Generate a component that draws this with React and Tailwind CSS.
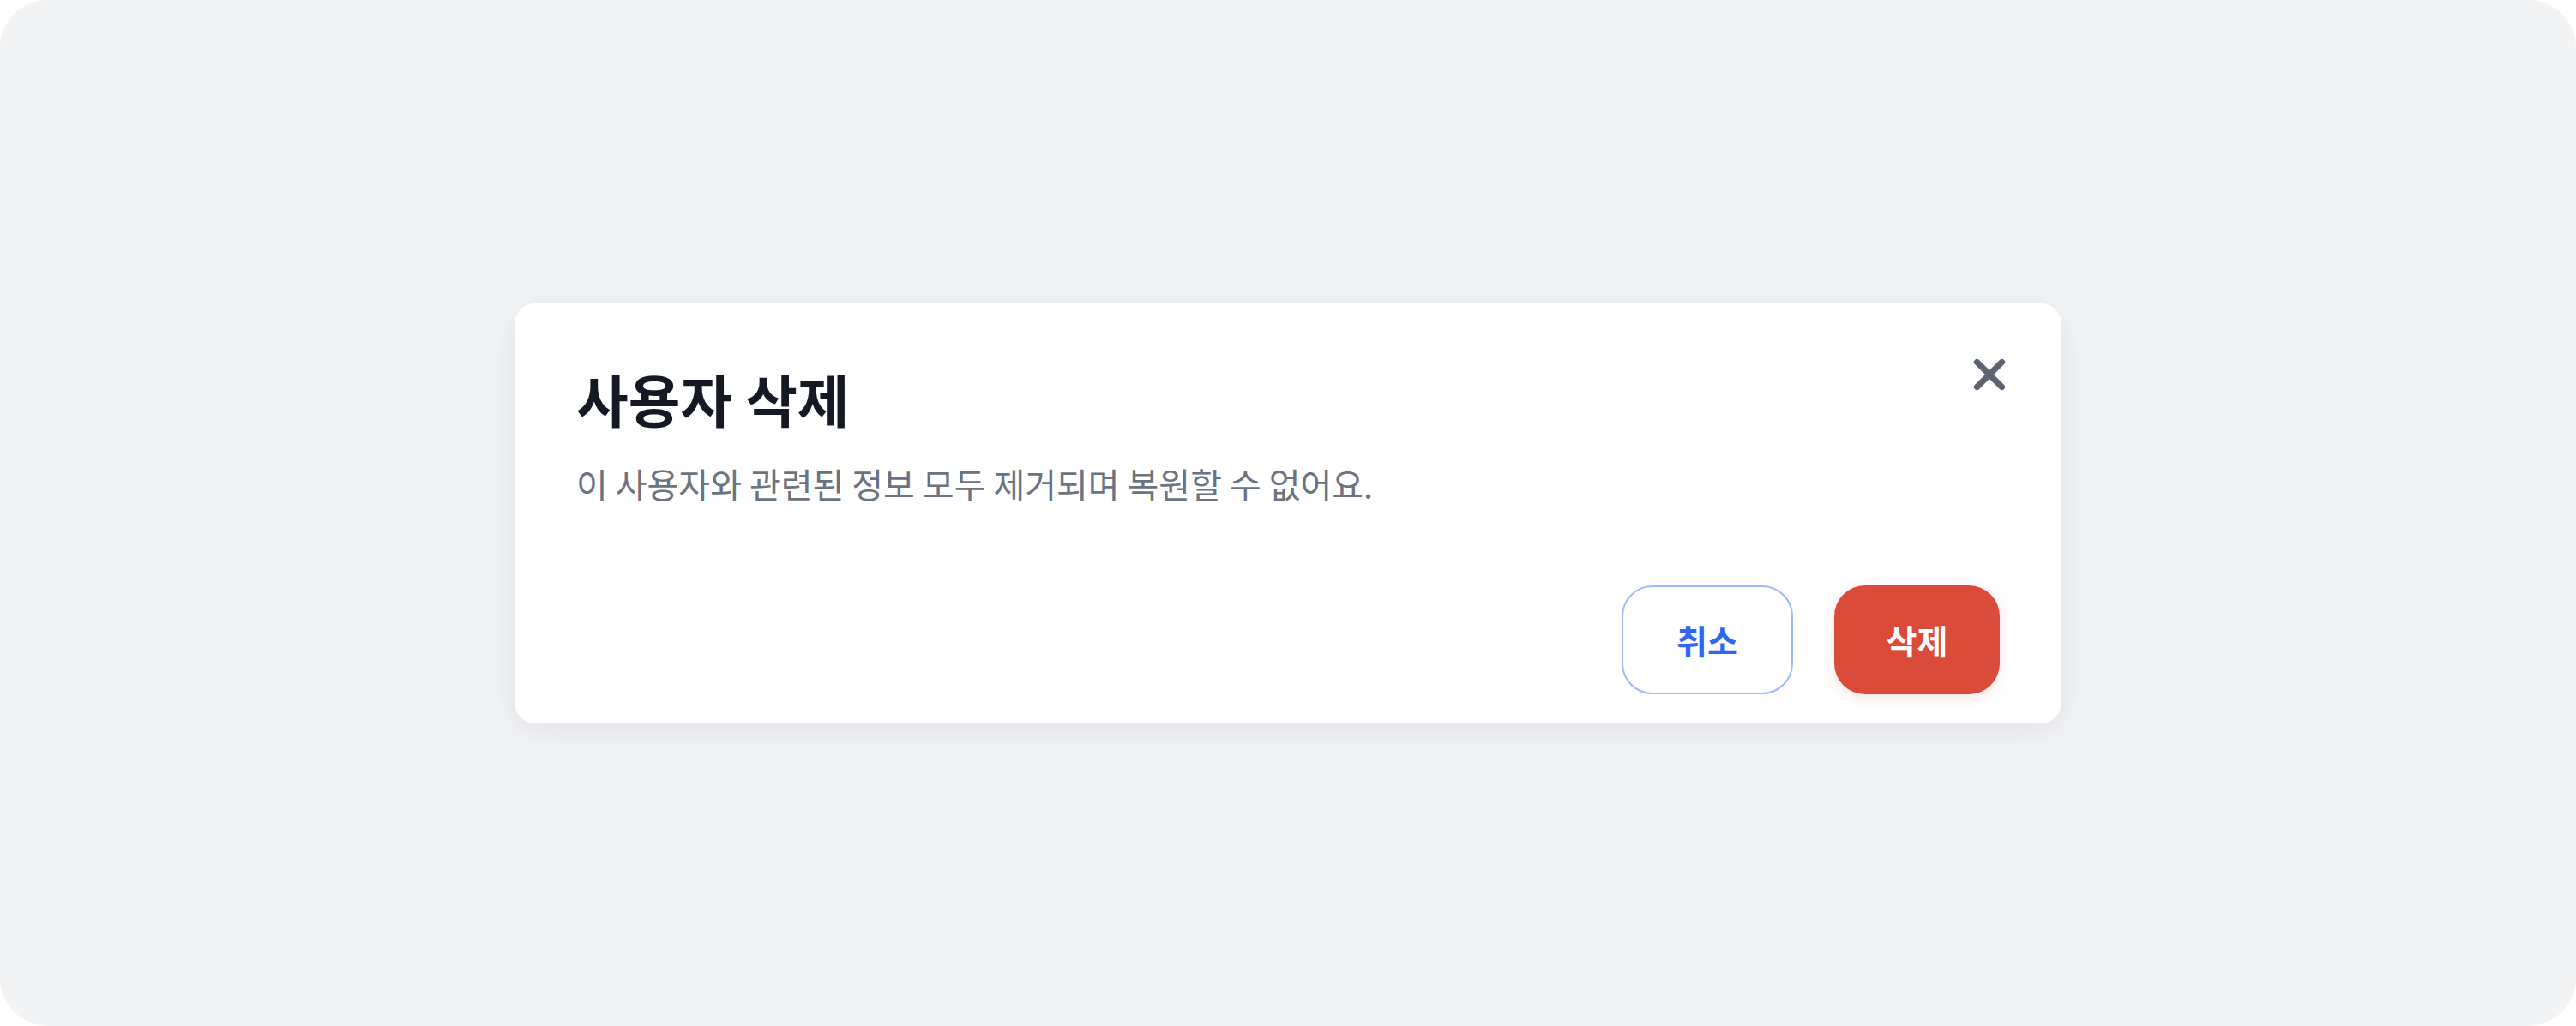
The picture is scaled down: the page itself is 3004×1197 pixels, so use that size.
import React from "react";
import { X } from "lucide-react";

const font = { fontFamily: '"Noto Sans CJK KR", "Noto Sans", sans-serif' };

const DeleteUserDialog = ({ onCancel, onConfirm }) => {
  return (
    <div className="relative w-[1804px] rounded-[24px] bg-white px-[72px] pt-[74px] pb-[34px] shadow-[0_8px_40px_rgba(17,24,39,0.08)]">
      <button
        onClick={onCancel}
        className="absolute top-[47px] right-[48px] flex h-[72px] w-[72px] items-center justify-center text-[#5d6471]"
      >
        <X size={58} strokeWidth={3} />
      </button>

      <h2 className="text-[66px] leading-[72px] font-bold text-[#141923]">사용자 삭제</h2>
      <p className="mt-[40px] text-[40px] leading-[48px] text-[#6b7280]">
        이 사용자와 관련된 정보 모두 제거되며 복원할 수 없어요.
      </p>

      <div className="mt-[95px] flex justify-end gap-[48px]">
        <button
          onClick={onCancel}
          className="h-[127px] w-[200px] rounded-[36px] border-2 border-[#9db8fb] bg-white text-[39px] font-bold text-[#2f66f2]"
        >
          취소
        </button>
        <button
          onClick={onConfirm}
          className="h-[127px] w-[193px] rounded-[36px] bg-[#db4b3a] text-[39px] font-bold text-white shadow-[0_4px_16px_rgba(219,75,58,0.15)]"
        >
          삭제
        </button>
      </div>
    </div>
  );
};

export default function App() {
  return (
    <div className="h-[1197px] w-[3004px] bg-white" style={font}>
      <div className="flex h-full w-full items-center justify-center rounded-[56px] bg-[#f2f3f5]">
        <DeleteUserDialog onCancel={() => {}} onConfirm={() => {}} />
      </div>
    </div>
  );
}
